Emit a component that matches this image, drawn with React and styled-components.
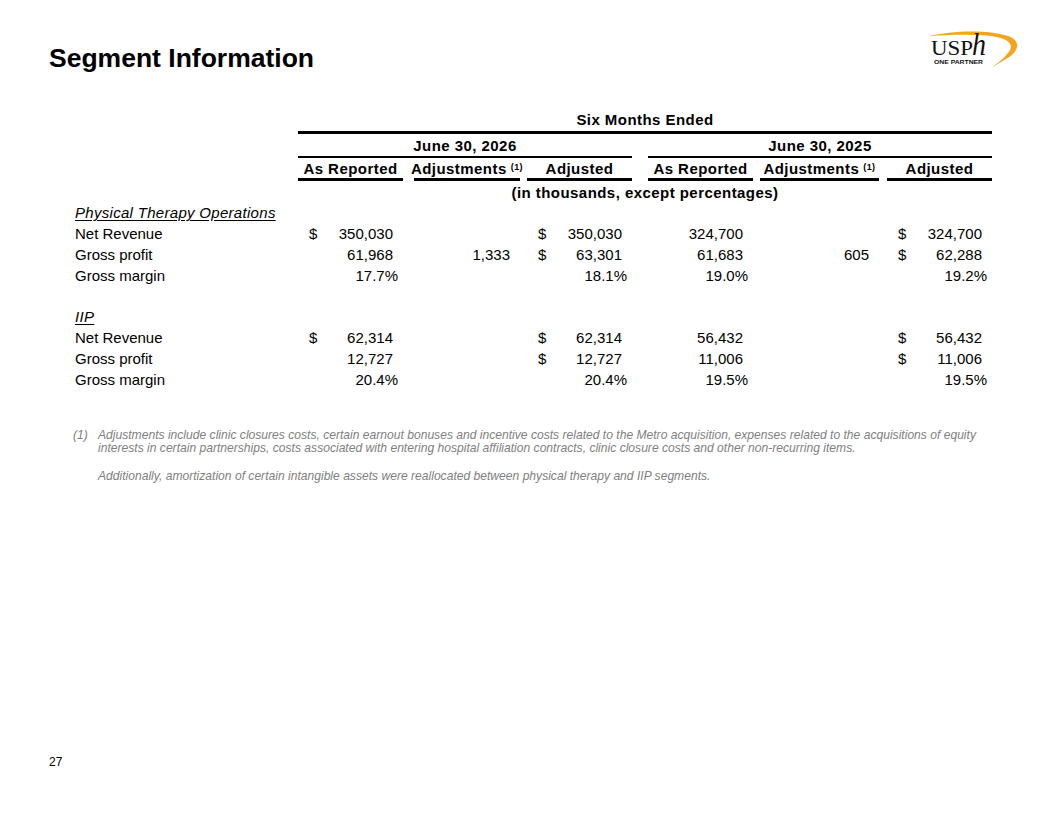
import React from "react";
import styled, { createGlobalStyle } from "styled-components";

const GlobalStyle = createGlobalStyle`
  * { box-sizing: border-box; }
  body {
    margin: 0;
    background: #fff;
    font-family: "Liberation Sans", Arial, sans-serif;
    color: #000;
  }
`;

const Page = styled.div`
  width: 1056px;
  height: 816px;
  display: flex;
  flex-direction: column;
  background: #fff;
  overflow: hidden;
`;

const Header = styled.div`
  height: 80px;
  display: flex;
  justify-content: space-between;
  align-items: flex-start;
  padding: 28px 38px 0 49px;
`;

const Title = styled.h1`
  margin: 15px 0 0;
  font-size: 26.5px;
  line-height: 30px;
  font-weight: bold;
`;

const Table = styled.div`
  margin: 28px 0 0 75px;
  display: grid;
  grid-template-columns: 223px 105px 117px 112px 121px 126px 113px;
  font-size: 15px;
`;

const Span = styled.div`
  grid-column: ${p => p.$col};
  padding-left: ${p => p.$gap || 0}px;
`;

const Rule = styled.div`
  height: ${p => p.$h}px;
  border-bottom: ${p => p.$w || 0}px solid #000;
  display: flex;
  align-items: center;
  justify-content: center;
  font-weight: bold;
  letter-spacing: 0.45px;
  white-space: nowrap;
`;

const Sup = styled.sup`
  font-size: 9px;
  line-height: 0;
  margin-left: 4px;
  position: relative;
  top: -1px;
`;

const Label = styled.div`
  height: 20.9px;
  line-height: 20.9px;
  white-space: nowrap;
  font-style: ${p => (p.$section ? "italic" : "normal")};
  text-decoration: ${p => (p.$section ? "underline" : "none")};
  letter-spacing: ${p => (p.$section ? "0.3px" : "0")};
  text-underline-offset: 2px;
`;

const Blank = styled.div`
  grid-column: ${p => p.$col || "1 / 8"};
  height: 20.9px;
`;

const Cell = styled.div`
  height: 20.9px;
  line-height: 20.9px;
  display: flex;
  justify-content: space-between;
  padding-left: ${p => p.$gap + 11}px;
  padding-right: ${p => (p.$pct ? 5 : 10)}px;
  white-space: nowrap;
`;

const Notes = styled.div`
  margin: 38px 0 0 73px;
  display: grid;
  grid-template-columns: 25px 1fr;
  row-gap: 15px;
  font-size: 12.1px;
  line-height: 13px;
  font-style: italic;
  color: #808080;
  white-space: nowrap;
`;

const PageNo = styled.div`
  margin-top: auto;
  padding: 0 0 47px 49px;
  font-size: 12px;
  line-height: 14px;
`;

const gaps = [0, 11, 7, 16, 7, 8];

const subHeads = ["As Reported", "Adjustments", "Adjusted", "As Reported", "Adjustments", "Adjusted"];

const sections = [
  {
    name: "Physical Therapy Operations",
    rows: [
      ["Net Revenue", ["$350,030", "", "$350,030", "324,700", "", "$324,700"]],
      ["Gross profit", ["61,968", "1,333", "$63,301", "61,683", "605", "$62,288"]],
      ["Gross margin", ["17.7%", "", "18.1%", "19.0%", "", "19.2%"]],
    ],
  },
  {
    name: "IIP",
    rows: [
      ["Net Revenue", ["$62,314", "", "$62,314", "56,432", "", "$56,432"]],
      ["Gross profit", ["12,727", "", "$12,727", "11,006", "", "$11,006"]],
      ["Gross margin", ["20.4%", "", "20.4%", "19.5%", "", "19.5%"]],
    ],
  },
];

const Logo = () => (
  <svg width="92" height="44" viewBox="0 0 92 44">
    <path
      d="M3 8 C 25 3, 60 1, 82 8 C 94 12, 95 22, 80 31 C 75 34, 70 37, 65 40 C 72 35, 80 29, 84 22 C 88 14, 78 9, 60 7.5 C 40 6, 20 7, 3 8 Z"
      fill="#F4A51C"
    />
    <text x="5" y="27" fontFamily="Liberation Serif, serif" fontSize="20" textLength="42" lengthAdjust="spacingAndGlyphs" fill="#111">
      USP
    </text>
    <text x="46" y="27" fontFamily="Liberation Serif, serif" fontStyle="italic" fontSize="31" textLength="14" lengthAdjust="spacingAndGlyphs" fill="#111">
      h
    </text>
    <text x="8" y="36" fontFamily="Liberation Sans, sans-serif" fontWeight="bold" fontSize="5.8" textLength="49" lengthAdjust="spacingAndGlyphs" fill="#111">
      ONE PARTNER
    </text>
  </svg>
);

const Value = ({ v, gap }) => {
  const dollar = v.startsWith("$");
  const num = dollar ? v.slice(1) : v;
  return (
    <Cell $gap={gap} $pct={num.endsWith("%")}>
      <span>{dollar ? "$" : ""}</span>
      <span>{num}</span>
    </Cell>
  );
};

export default function App() {
  return (
    <Page>
      <GlobalStyle />
      <Header>
        <Title>Segment Information</Title>
        <Logo />
      </Header>

      <Table>
        <Span $col="2 / 8">
          <Rule $h={26} $w={3}>Six Months Ended</Rule>
        </Span>

        <Span $col="2 / 5">
          <Rule $h={24} $w={2}>June 30, 2026</Rule>
        </Span>
        <Span $col="5 / 8" $gap={16}>
          <Rule $h={24} $w={2}>June 30, 2025</Rule>
        </Span>

        {subHeads.map((h, i) => (
          <Span key={i} $col={`${i + 2} / ${i + 3}`} $gap={gaps[i]}>
            <Rule $h={23} $w={3}>
              {h}
              {h === "Adjustments" && <Sup>(1)</Sup>}
            </Rule>
          </Span>
        ))}

        <Span $col="2 / 8">
          <Rule $h={22}>(in thousands, except percentages)</Rule>
        </Span>

        {sections.map((s, si) => (
          <React.Fragment key={s.name}>
            {si > 0 && <Blank />}
            <Label $section>{s.name}</Label>
            <Blank $col="2 / 8" />
            {s.rows.map(([label, vals]) => (
              <React.Fragment key={label}>
                <Label>{label}</Label>
                {vals.map((v, i) => (
                  <Value key={i} v={v} gap={gaps[i]} />
                ))}
              </React.Fragment>
            ))}
          </React.Fragment>
        ))}
      </Table>

      <Notes>
        <span>(1)</span>
        <span>
          Adjustments include clinic closures costs, certain earnout bonuses and incentive costs related to the Metro acquisition, expenses related to the acquisitions of equity
          <br />
          interests in certain partnerships, costs associated with entering hospital affiliation contracts, clinic closure costs and other non-recurring items.
        </span>
        <span />
        <span>Additionally, amortization of certain intangible assets were reallocated between physical therapy and IIP segments.</span>
      </Notes>

      <PageNo>27</PageNo>
    </Page>
  );
}
